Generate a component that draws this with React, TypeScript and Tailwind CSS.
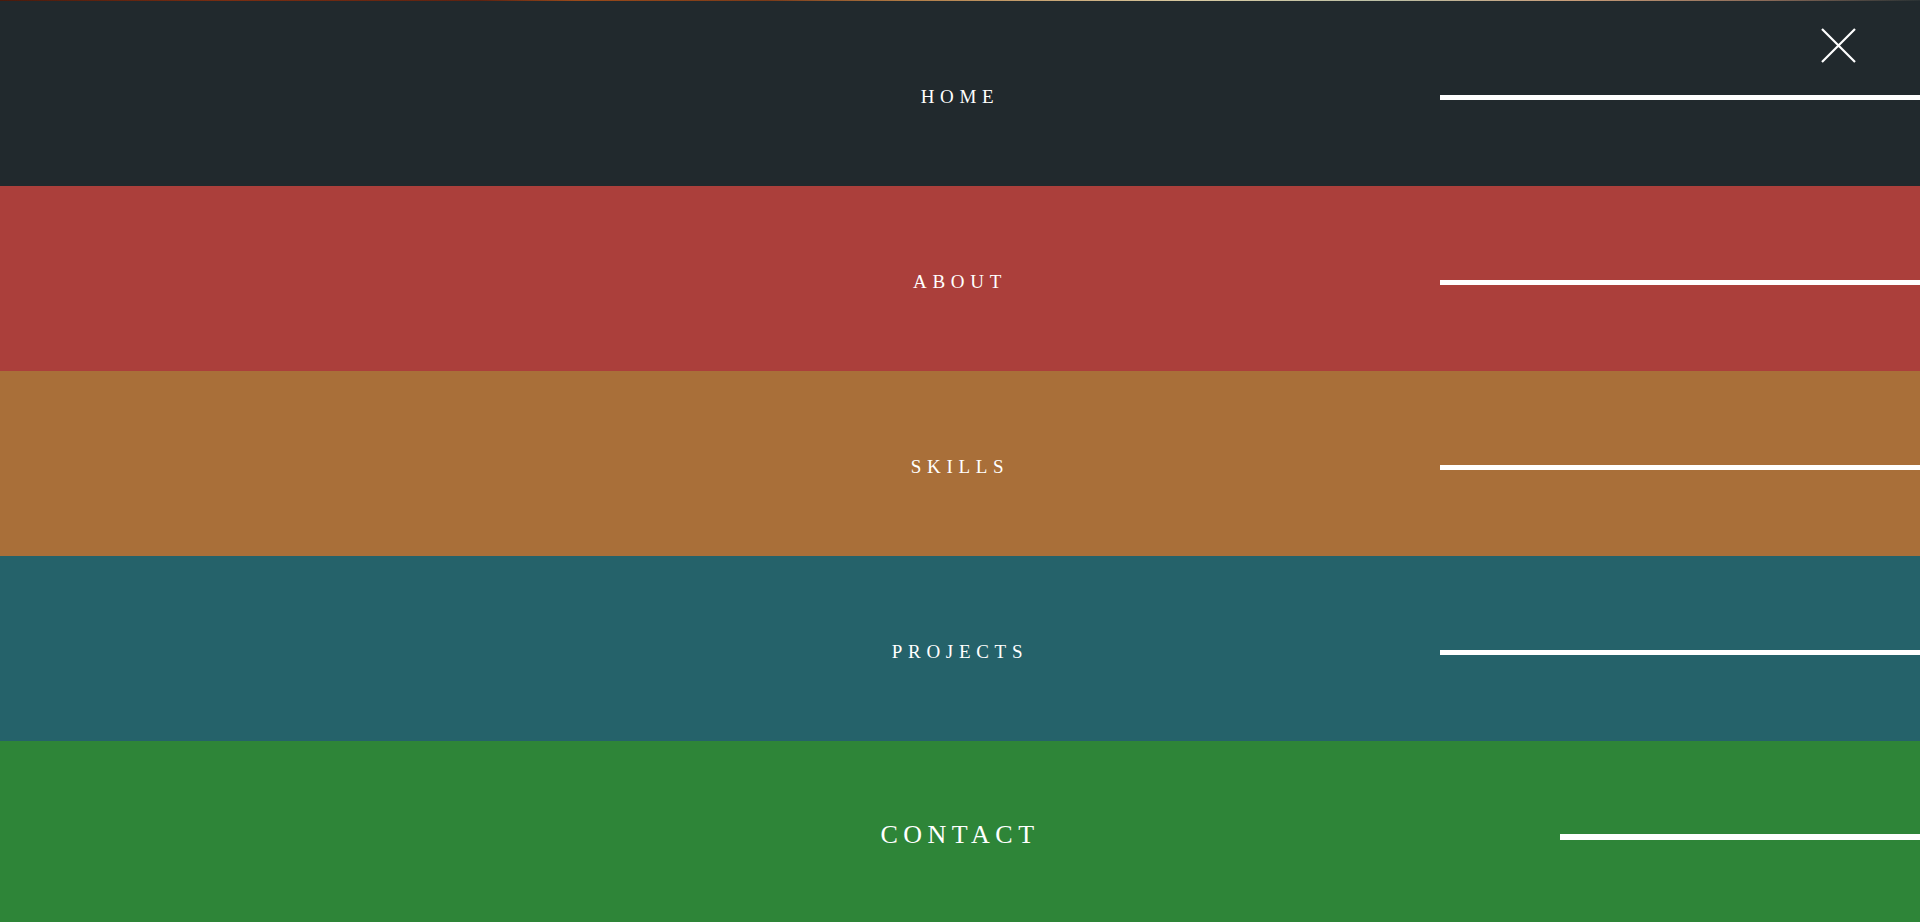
const items = [
  { label: 'HOME', bg: 'bg-[#21292d]', active: false },
  { label: 'ABOUT', bg: 'bg-[#ab3f3b]', active: false },
  { label: 'SKILLS', bg: 'bg-[#a96f39]', active: false },
  { label: 'PROJECTS', bg: 'bg-[#25626a]', active: false },
  { label: 'CONTACT', bg: 'bg-[#2e8538]', active: true },
];

const MenuRow = ({ label, bg, active }: { label: string; bg: string; active: boolean }) => {
  return (
    <a href="#" className={`${bg} grid grid-cols-4 items-center h-[185px] shrink-0 pt-[7px]`}>
      <span
        className={
          active
            ? 'col-start-2 col-span-2 text-center text-white text-[26px] tracking-[5.5px] mb-[5px]'
            : 'col-start-2 col-span-2 text-center text-white text-[19px] tracking-[5.7px]'
        }
      >
        {label}
      </span>
      <div className="flex justify-end">
        <div className={active ? 'w-[360px] h-[6px] bg-white' : 'w-[480px] h-[5px] bg-white'} />
      </div>
    </a>
  );
};

export default function App() {
  return (
    <div className="relative h-[922px] w-full overflow-hidden flex flex-col font-['Liberation_Serif',serif]">
      <div className="h-[1px] shrink-0 bg-[linear-gradient(90deg,#4a1a0c_0%,#7a2e12_12%,#5e2210_25%,#9a4a1a_30%,#7a3a18_40%,#b07a44_47%,#caa878_55%,#d8caa2_62%,#bcc0a6_72%,#c89c78_82%,#8a6a58_92%,#2a3234_100%)]" />
      {items.map((item) => (
        <MenuRow key={item.label} {...item} />
      ))}
      <button className="absolute left-[1821px] top-[28px] w-[35px] h-[35px]" aria-label="Close">
        <svg viewBox="0 0 35 35" className="w-full h-full" fill="none" stroke="white" strokeWidth="2.2">
          <path d="M1 1 L34 34 M34 1 L1 34" />
        </svg>
      </button>
    </div>
  );
}
